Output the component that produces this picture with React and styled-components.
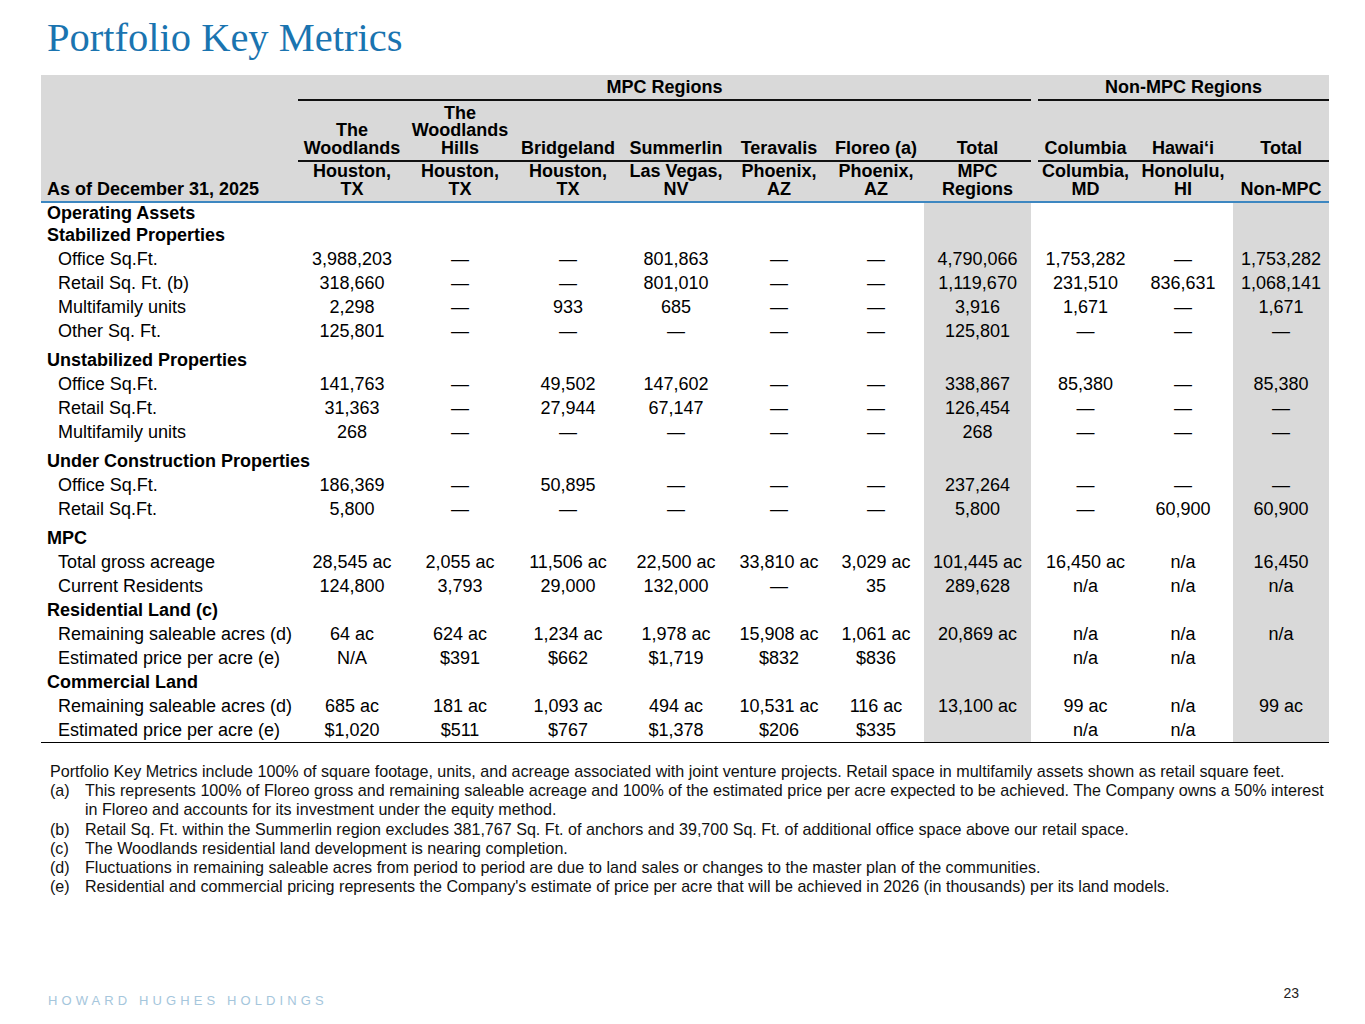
import React from "react";
import styled, { createGlobalStyle } from "styled-components";

const GlobalStyle = createGlobalStyle`
  html, body {
    margin: 0;
    padding: 0;
    background: #fff;
  }
  body {
    font-family: "Liberation Sans", Arial, sans-serif;
    color: #000;
  }
`;

const DASH = "\u2014";

const columns = [
  { name: ["The", "Woodlands"], place: ["Houston,", "TX"] },
  { name: ["The", "Woodlands", "Hills"], place: ["Houston,", "TX"] },
  { name: ["Bridgeland"], place: ["Houston,", "TX"] },
  { name: ["Summerlin"], place: ["Las Vegas,", "NV"] },
  { name: ["Teravalis"], place: ["Phoenix,", "AZ"] },
  { name: ["Floreo (a)"], place: ["Phoenix,", "AZ"] },
  { name: ["Total"], place: ["MPC", "Regions"] },
];

const nonMpcColumns = [
  { name: ["Columbia"], place: ["Columbia,", "MD"] },
  { name: ["Hawai\u2018i"], place: ["Honolulu,", "HI"] },
  { name: ["Total"], place: ["Non-MPC"] },
];

// each row: label, mpc values (7), non-mpc values (3)
const rows = [
  { section: "Operating Assets", first: true },
  { section: "Stabilized Properties" },
  { label: "Office Sq.Ft.", mpc: ["3,988,203", DASH, DASH, "801,863", DASH, DASH, "4,790,066"], non: ["1,753,282", DASH, "1,753,282"] },
  { label: "Retail Sq. Ft. (b)", mpc: ["318,660", DASH, DASH, "801,010", DASH, DASH, "1,119,670"], non: ["231,510", "836,631", "1,068,141"] },
  { label: "Multifamily units", mpc: ["2,298", DASH, "933", "685", DASH, DASH, "3,916"], non: ["1,671", DASH, "1,671"] },
  { label: "Other Sq. Ft.", mpc: ["125,801", DASH, DASH, DASH, DASH, DASH, "125,801"], non: [DASH, DASH, DASH] },
  { section: "Unstabilized Properties", gap: true },
  { label: "Office Sq.Ft.", mpc: ["141,763", DASH, "49,502", "147,602", DASH, DASH, "338,867"], non: ["85,380", DASH, "85,380"] },
  { label: "Retail Sq.Ft.", mpc: ["31,363", DASH, "27,944", "67,147", DASH, DASH, "126,454"], non: [DASH, DASH, DASH] },
  { label: "Multifamily units", mpc: ["268", DASH, DASH, DASH, DASH, DASH, "268"], non: [DASH, DASH, DASH] },
  { section: "Under Construction Properties", gap: true },
  { label: "Office Sq.Ft.", mpc: ["186,369", DASH, "50,895", DASH, DASH, DASH, "237,264"], non: [DASH, DASH, DASH] },
  { label: "Retail Sq.Ft.", mpc: ["5,800", DASH, DASH, DASH, DASH, DASH, "5,800"], non: [DASH, "60,900", "60,900"] },
  { section: "MPC", gap: true },
  { label: "Total gross acreage", mpc: ["28,545 ac", "2,055 ac", "11,506 ac", "22,500 ac", "33,810 ac", "3,029 ac", "101,445 ac"], non: ["16,450 ac", "n/a", "16,450"] },
  { label: "Current Residents", mpc: ["124,800", "3,793", "29,000", "132,000", DASH, "35", "289,628"], non: ["n/a", "n/a", "n/a"] },
  { section: "Residential Land (c)" },
  { label: "Remaining saleable acres (d)", mpc: ["64 ac", "624 ac", "1,234 ac", "1,978 ac", "15,908 ac", "1,061 ac", "20,869 ac"], non: ["n/a", "n/a", "n/a"] },
  { label: "Estimated price per acre (e)", mpc: ["N/A", "$391", "$662", "$1,719", "$832", "$836", ""], non: ["n/a", "n/a", ""] },
  { section: "Commercial Land" },
  { label: "Remaining saleable acres (d)", mpc: ["685 ac", "181 ac", "1,093 ac", "494 ac", "10,531 ac", "116 ac", "13,100 ac"], non: ["99 ac", "n/a", "99 ac"] },
  { label: "Estimated price per acre (e)", mpc: ["$1,020", "$511", "$767", "$1,378", "$206", "$335", ""], non: ["n/a", "n/a", ""], last: true },
];

const colWidths = [257, 108, 108, 108, 108, 98, 96, 107, 7, 95, 100, 96];

const lines = (arr) =>
  arr.map((t, i) => (
    <React.Fragment key={i}>
      {i > 0 && <br />}
      {t}
    </React.Fragment>
  ));

export default function App() {
  return (
    <>
      <GlobalStyle />
      <Page>
        <Title>Portfolio Key Metrics</Title>

        <Table>
          <colgroup>
            {colWidths.map((w, i) => (
              <col key={i} style={{ width: w }} />
            ))}
          </colgroup>
          <thead>
            <tr>
              <CornerCell rowSpan={3}>As of December 31, 2025</CornerCell>
              <GroupCell colSpan={7}>MPC Regions</GroupCell>
              <SpacerHead />
              <GroupCell colSpan={3}>Non-MPC Regions</GroupCell>
            </tr>
            <tr>
              {columns.map((c, i) => (
                <NameCell key={i}>{lines(c.name)}</NameCell>
              ))}
              <SpacerHead />
              {nonMpcColumns.map((c, i) => (
                <NameCell key={i}>{lines(c.name)}</NameCell>
              ))}
            </tr>
            <tr>
              {columns.map((c, i) => (
                <PlaceCell key={i}>{lines(c.place)}</PlaceCell>
              ))}
              <PlaceCell />
              {nonMpcColumns.map((c, i) => (
                <PlaceCell key={i}>{lines(c.place)}</PlaceCell>
              ))}
            </tr>
          </thead>
          <tbody>
            {rows.map((r, ri) => {
              if (r.section) {
                return (
                  <tr key={ri}>
                    <SectionLabel $gap={r.gap} $first={r.first}>
                      {r.section}
                    </SectionLabel>
                    {colWidths.slice(1).map((_, ci) => (
                      <Cell key={ci} $shade={ci === 6 || ci === 10} $first={r.first} />
                    ))}
                  </tr>
                );
              }
              return (
                <tr key={ri}>
                  <ItemLabel $last={r.last}>{r.label}</ItemLabel>
                  {r.mpc.map((v, ci) => (
                    <Cell key={ci} $shade={ci === 6} $last={r.last}>
                      {v}
                    </Cell>
                  ))}
                  <Cell $last={r.last} />
                  {r.non.map((v, ci) => (
                    <Cell key={ci} $shade={ci === 2} $last={r.last}>
                      {v}
                    </Cell>
                  ))}
                </tr>
              );
            })}
          </tbody>
        </Table>

        <Notes>
          <NoteIntro>
            Portfolio Key Metrics include 100% of square footage, units, and acreage associated with joint venture
            projects. Retail space in multifamily assets shown as retail square feet.
          </NoteIntro>
          <NoteRow>
            <NoteMark>(a)</NoteMark>
            <NoteText>
              This represents 100% of Floreo gross and remaining saleable acreage and 100% of the estimated price per
              acre expected to be achieved. The Company owns a 50% interest
              <br />
              in Floreo and accounts for its investment under the equity method.
            </NoteText>
          </NoteRow>
          <NoteRow>
            <NoteMark>(b)</NoteMark>
            <NoteText>
              Retail Sq. Ft. within the Summerlin region excludes 381,767 Sq. Ft. of anchors and 39,700 Sq. Ft. of
              additional office space above our retail space.
            </NoteText>
          </NoteRow>
          <NoteRow>
            <NoteMark>(c)</NoteMark>
            <NoteText>The Woodlands residential land development is nearing completion.</NoteText>
          </NoteRow>
          <NoteRow>
            <NoteMark>(d)</NoteMark>
            <NoteText>
              Fluctuations in remaining saleable acres from period to period are due to land sales or changes to the
              master plan of the communities.
            </NoteText>
          </NoteRow>
          <NoteRow>
            <NoteMark>(e)</NoteMark>
            <NoteText>
              Residential and commercial pricing represents the Company's estimate of price per acre that will be
              achieved in 2026 (in thousands) per its land models.
            </NoteText>
          </NoteRow>
        </Notes>

        <Footer>
          <Brand>HOWARD HUGHES HOLDINGS</Brand>
          <PageNum>23</PageNum>
        </Footer>
      </Page>
    </>
  );
}

const Page = styled.div`
  width: 1365px;
  height: 1024px;
  display: flex;
  flex-direction: column;
  overflow: hidden;
  box-sizing: border-box;
`;

const Title = styled.h1`
  margin: 16px 0 15px 47px;
  font-family: "Liberation Serif", "Times New Roman", serif;
  font-weight: normal;
  font-size: 40.5px;
  line-height: 44px;
  color: #1a74b0;
`;

const Table = styled.table`
  margin-left: 41px;
  width: 1288px;
  table-layout: fixed;
  border-collapse: separate;
  border-spacing: 0;
  font-family: "Liberation Sans", Arial, sans-serif;
  font-size: 18px;
  color: #000;

  th {
    background: #d9d9d9;
    font-weight: bold;
    text-align: center;
    vertical-align: bottom;
    padding: 0;
    white-space: nowrap;
  }
`;

const CornerCell = styled.th`
  && {
    text-align: left;
    padding: 0 0 3px 6px;
    line-height: 17.5px;
    border-bottom: 2px solid #3d87c1;
  }
`;

const GroupCell = styled.th`
  && {
    height: 24px;
    line-height: 24px;
    vertical-align: middle;
    border-bottom: 2px solid #111;
  }
`;

const SpacerHead = styled.th``;

const NameCell = styled.th`
  && {
    height: 56px;
    line-height: 17.5px;
    padding-bottom: 3px;
    border-bottom: 2px solid #111;
  }
`;

const PlaceCell = styled.th`
  && {
    height: 36px;
    line-height: 17.5px;
    padding-bottom: 3px;
    border-bottom: 2px solid #3d87c1;
  }
`;

const Cell = styled.td`
  padding: 0;
  height: ${(p) => (p.$first ? "20px" : "24px")};
  line-height: 24px;
  text-align: center;
  white-space: nowrap;
  vertical-align: bottom;
  background: ${(p) => (p.$shade ? "#d9d9d9" : "transparent")};
  border-bottom: ${(p) => (p.$last ? "1px solid #000" : "none")};
`;

const SectionLabel = styled.td`
  padding: ${(p) => (p.$gap ? "5px" : "0")} 0 0 6px;
  height: ${(p) => (p.$first ? "20px" : "24px")};
  line-height: ${(p) => (p.$first ? "20px" : "24px")};
  font-weight: bold;
  white-space: nowrap;
  vertical-align: bottom;
`;

const ItemLabel = styled.td`
  padding: 0 0 0 17px;
  height: 24px;
  line-height: 24px;
  white-space: nowrap;
  border-bottom: ${(p) => (p.$last ? "1px solid #000" : "none")};
`;

const Notes = styled.div`
  margin: 19px 0 0 50px;
  width: 1300px;
  font-family: "Liberation Sans", Arial, sans-serif;
  font-size: 16.1px;
  line-height: 19.2px;
  white-space: nowrap;
  color: #111;
`;

const NoteIntro = styled.div``;

const NoteRow = styled.div`
  display: grid;
  grid-template-columns: 35px 1fr;
`;

const NoteMark = styled.div``;

const NoteText = styled.div``;

const Footer = styled.div`
  margin-top: auto;
  display: flex;
  justify-content: space-between;
  align-items: flex-end;
  padding: 0 66px 15px 48px;
`;

const Brand = styled.div`
  font-family: "Liberation Sans", Arial, sans-serif;
  font-size: 13px;
  line-height: 16px;
  letter-spacing: 4.1px;
  color: #a5c6dc;
`;

const PageNum = styled.div`
  font-family: "Liberation Sans", Arial, sans-serif;
  font-size: 14px;
  line-height: 16px;
  margin-bottom: 8px;
  color: #222;
`;
